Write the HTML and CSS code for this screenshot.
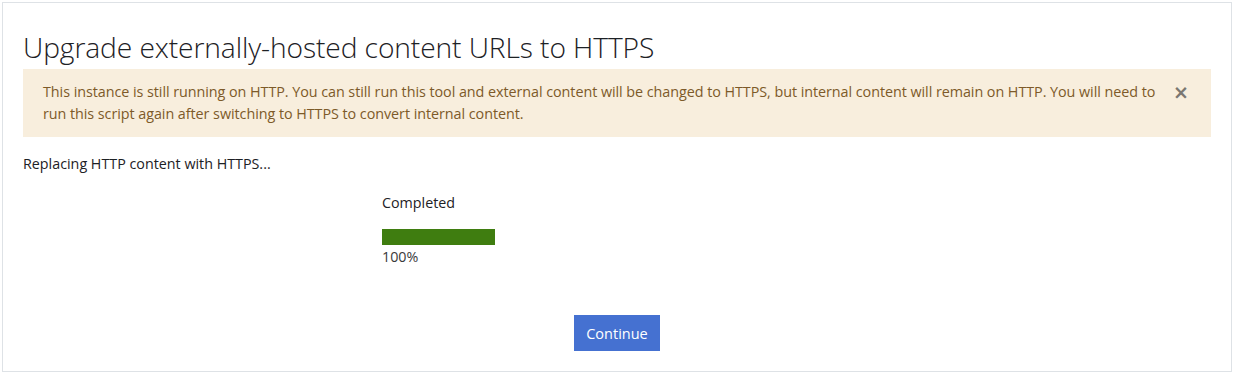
FILE: index.html
```html
<!DOCTYPE html>
<html lang="en">
<head>
    <meta charset="UTF-8">
    <title>Upgrade externally-hosted content URLs to HTTPS</title>
    <link rel="stylesheet" href="styles.css">
</head>
<body>
    <div class="box">
        <h2>Upgrade externally-hosted content URLs to HTTPS</h2>

        <!-- Warning alert -->
        <div class="alert">
            <p>This instance is still running on HTTP. You can still run this tool and external content will be changed to HTTPS, but internal content will remain on HTTP. You will need to run this script again after switching to HTTPS to convert internal content.</p>
            <button class="close" aria-label="Close">&times;</button>
        </div>

        <p class="status">Replacing HTTP content with HTTPS...</p>

        <!-- Progress -->
        <div class="progress">
            <div class="progress-label">Completed</div>
            <div class="bar"><div class="bar-fill" style="width:100%"></div></div>
            <div class="progress-value">100%</div>
        </div>

        <div class="actions">
            <button class="btn">Continue</button>
        </div>
    </div>
</body>
</html>
```

FILE: styles.css
```css
body {
    margin: 0;
    padding: 2px;
    background: #fff;
    font-family: "Open Sans", "Liberation Sans", sans-serif;
    color: #1d2125;
}

.box {
    width: 1188px;
    height: 368px;
    border: 1px solid #dee2e6;
    padding: 0 20px;
}

h2 {
    margin: 23px 0 0;
    height: 42px;
    font-size: 28.2px;
    font-weight: 300;
    line-height: 42px;
    color: #1d2125;
    letter-spacing: -0.1px;
}

.alert {
    display: flex;
    align-items: flex-start;
    margin-top: 1px;
    padding: 12px 20px;
    background-color: #f8eedd;
    color: #7d5a29;
}

.alert p {
    flex: 1;
    margin: 0;
    font-size: 14.35px;
    line-height: 22px;
    letter-spacing: -0.05px;
}

.close {
    width: 20px;
    margin: 0 0 0 10px;
    padding: 0;
    border: 0;
    background: none;
    color: #7b7771;
    font-family: "DejaVu Sans", sans-serif;
    font-size: 19px;
    font-weight: bold;
    line-height: 22px;
    cursor: pointer;
}

.status {
    margin: 17px 0 0;
    font-size: 14.3px;
    line-height: 20px;
}

.progress {
    width: 470px;
    margin: 19px auto 0;
    font-size: 14.3px;
    line-height: 20px;
}

.progress-label {
    margin-bottom: 16px;
}

.bar {
    width: 113px;
    height: 16px;
}

.bar-fill {
    height: 100%;
    background-color: #3f7d10;
}

.progress-value {
    margin-top: 2px;
    color: #3a3a3a;
}

.actions {
    margin-top: 48px;
    text-align: center;
}

.btn {
    width: 86px;
    height: 36px;
    border: 0;
    background-color: #4571d1;
    color: #fff;
    font-family: "Open Sans", "Liberation Sans", sans-serif;
    font-size: 14.5px;
    cursor: pointer;
}
```
